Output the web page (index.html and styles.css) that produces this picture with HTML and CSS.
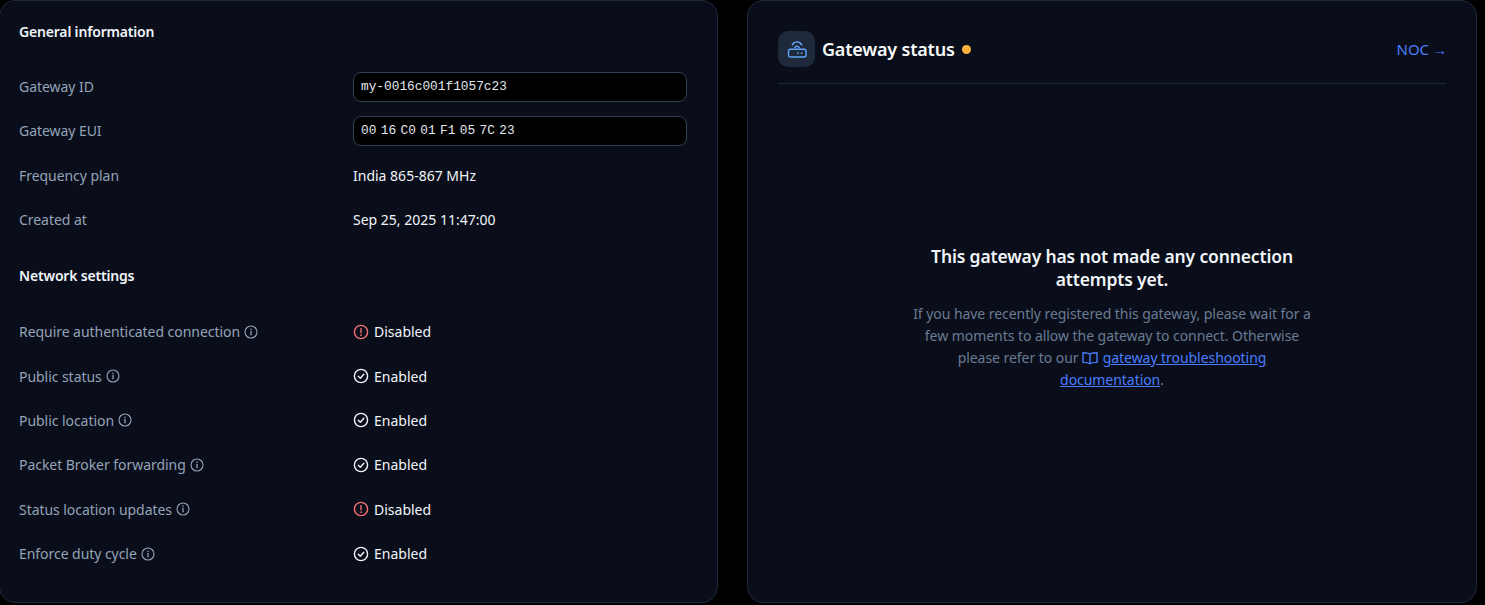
FILE: index.html
```html
<!DOCTYPE html>
<html lang="en">
<head>
    <meta charset="UTF-8">
    <meta name="viewport" content="width=device-width, initial-scale=1.0">
    <title>Gateway overview</title>
    <link rel="stylesheet" href="styles.css">
</head>
<body>
    <svg class="icon-defs" width="0" height="0">
        <symbol id="i-info" viewBox="0 0 14 14">
            <circle cx="7" cy="7" r="6" fill="none" stroke="currentColor" stroke-width="1.1"/>
            <path d="M7 6.4v3.4" fill="none" stroke="currentColor" stroke-width="1.3" stroke-linecap="round"/>
            <circle cx="7" cy="4.3" r=".8" fill="currentColor"/>
        </symbol>
        <symbol id="i-check" viewBox="0 0 16 16">
            <circle cx="8" cy="8" r="6.6" fill="none" stroke="currentColor" stroke-width="1.4"/>
            <path d="M5.3 8.2l2 2 3.5-4" fill="none" stroke="currentColor" stroke-width="1.4" stroke-linecap="round" stroke-linejoin="round"/>
        </symbol>
        <symbol id="i-alert" viewBox="0 0 16 16">
            <circle cx="8" cy="8" r="6.6" fill="none" stroke="currentColor" stroke-width="1.4"/>
            <path d="M8 4.6v4.2" fill="none" stroke="currentColor" stroke-width="1.4" stroke-linecap="round"/>
            <circle cx="8" cy="11.2" r=".85" fill="currentColor"/>
        </symbol>
    </svg>

    <div class="page">
        <section class="card info-card">
            <h3 class="section-title first">General information</h3>
            <div class="info-row">
                <div class="info-label">Gateway ID</div>
                <div class="code-box">my-0016c001f1057c23</div>
            </div>
            <div class="info-row">
                <div class="info-label">Gateway EUI</div>
                <div class="code-box">
                    <span>00</span><span>16</span><span>C0</span><span>01</span><span>F1</span><span>05</span><span>7C</span><span>23</span>
                </div>
            </div>
            <div class="info-row">
                <div class="info-label">Frequency plan</div>
                <div class="info-value">India 865-867 MHz</div>
            </div>
            <div class="info-row">
                <div class="info-label">Created at</div>
                <div class="info-value">Sep 25, 2025 11:47:00</div>
            </div>

            <h3 class="section-title">Network settings</h3>
            <div class="info-row">
                <div class="info-label">Require authenticated connection <svg class="info-icon"><use href="#i-info"/></svg></div>
                <div class="info-value status"><svg class="status-icon off"><use href="#i-alert"/></svg>Disabled</div>
            </div>
            <div class="info-row">
                <div class="info-label">Public status <svg class="info-icon"><use href="#i-info"/></svg></div>
                <div class="info-value status"><svg class="status-icon"><use href="#i-check"/></svg>Enabled</div>
            </div>
            <div class="info-row">
                <div class="info-label">Public location <svg class="info-icon"><use href="#i-info"/></svg></div>
                <div class="info-value status"><svg class="status-icon"><use href="#i-check"/></svg>Enabled</div>
            </div>
            <div class="info-row">
                <div class="info-label">Packet Broker forwarding <svg class="info-icon"><use href="#i-info"/></svg></div>
                <div class="info-value status"><svg class="status-icon"><use href="#i-check"/></svg>Enabled</div>
            </div>
            <div class="info-row">
                <div class="info-label">Status location updates <svg class="info-icon"><use href="#i-info"/></svg></div>
                <div class="info-value status"><svg class="status-icon off"><use href="#i-alert"/></svg>Disabled</div>
            </div>
            <div class="info-row">
                <div class="info-label">Enforce duty cycle <svg class="info-icon"><use href="#i-info"/></svg></div>
                <div class="info-value status"><svg class="status-icon"><use href="#i-check"/></svg>Enabled</div>
            </div>
        </section>

        <section class="card status-card">
            <div class="status-header">
                <div class="status-heading">
                    <div class="router-badge">
                        <svg width="20" height="20" viewBox="0 0 20 20" fill="none" stroke="currentColor" stroke-width="1.4" stroke-linecap="round">
                            <rect x="1.5" y="10.2" width="17.6" height="7.8" rx="2"/>
                            <path d="M7.8 8.4C8.8 6.8 11.2 6.8 12.2 8.4"/>
                            <path d="M5.3 5.8C7.4 1.9 12.6 1.9 14.7 5.8"/>
                            <path d="M10.8 14.2h.01M14.6 14.2h.01" stroke-width="1.7"/>
                        </svg>
                    </div>
                    <h2 class="status-title">Gateway status</h2>
                    <span class="status-dot"></span>
                </div>
                <a class="noc-link" href="#">NOC <span class="noc-arrow">→</span></a>
            </div>
            <div class="empty-state">
                <h3 class="empty-title">This gateway has not made any connection attempts yet.</h3>
                <p class="empty-text">
                    If you have recently registered this gateway, please wait for a few moments to allow the gateway to connect. Otherwise please refer to our
                    <svg class="book-icon" viewBox="0 0 16 16" fill="none" stroke="currentColor" stroke-width="1.4" stroke-linejoin="round"><path d="M8 4.2C6.8 3.1 4.6 2.8 1 2.8v9.6c3.6 0 5.8.3 7 1.4 1.2-1.1 3.4-1.4 7-1.4V2.8c-3.6 0-5.8.3-7 1.4zM8 4.2v9.6"/></svg>
                    <a href="#">gateway troubleshooting documentation</a>.
                </p>
            </div>
        </section>
    </div>
</body>
</html>
```

FILE: styles.css
```css
* {
    margin: 0;
    padding: 0;
    box-sizing: border-box;
}

body {
    font-family: "Noto Sans", "Open Sans", sans-serif;
    font-size: 14px;
    background-color: #000;
    color: #f1f5f9;
    overflow: hidden;
}

.icon-defs {
    display: block;
    height: 0;
}

.page {
    display: grid;
    grid-template-columns: 719px 730px;
    column-gap: 29px;
    margin-left: -1px;
}

.card {
    height: 603px;
    background-color: #090e1a;
    border: 1px solid #1e293b;
    border-radius: 16px;
}

/* ----------  left card  ---------- */
.info-card {
    padding: 0 30px 0 19px;
}

.section-title {
    height: 67.5px;
    padding-top: 24px;
    font-size: 14px;
    line-height: 20px;
    font-weight: 600;
    color: #f1f5f9;
    letter-spacing: -0.18px;
}

.section-title.first {
    padding-top: 21px;
    height: 63.4px;
}

.info-row {
    display: grid;
    grid-template-columns: 334px 334px;
    align-items: center;
    height: 44.4px;
}

.info-label {
    color: #94a3b8;
    display: flex;
    align-items: center;
    gap: 4px;
    letter-spacing: -0.05px;
}

.info-value {
    color: #f1f5f9;
}

.info-icon {
    width: 14px;
    height: 14px;
    color: #94a3b8;
}

.code-box {
    display: flex;
    align-items: center;
    gap: 4.4px;
    height: 30px;
    padding: 0 7px;
    background-color: #000;
    border: 1px solid #334155;
    border-radius: 8px;
    font-family: "Liberation Mono", monospace;
    font-size: 12.8px;
    color: #e2e8f0;
}

.status {
    display: flex;
    align-items: center;
    gap: 5px;
}

.status-icon {
    width: 16px;
    height: 16px;
    color: #f1f5f9;
}

.status-icon.off {
    color: #f87171;
}

/* ----------  right card  ---------- */
.status-card {
    padding: 0 30px;
}

.status-header {
    display: flex;
    justify-content: space-between;
    align-items: center;
    height: 83px;
    padding-top: 14px;
    border-bottom: 1px solid #1e293b;
}

.status-heading {
    display: flex;
    align-items: center;
    gap: 7px;
}

.router-badge {
    display: flex;
    align-items: center;
    justify-content: center;
    width: 37px;
    height: 36px;
    background-color: #1e293b;
    border-radius: 10px;
    color: #60a5fa;
}

.status-title {
    font-size: 18px;
    font-weight: 600;
    letter-spacing: -0.2px;
    color: #f8fafc;
}

.status-dot {
    width: 9px;
    height: 9px;
    background-color: #fbb03b;
    border-radius: 50%;
}

.noc-link {
    color: #4a7dff;
    text-decoration: none;
    font-size: 15px;
    margin-right: -1px;
}

.noc-arrow {
    font-family: "Liberation Sans", sans-serif;
    font-size: 14px;
}

.empty-state {
    width: 410px;
    margin: 0 auto;
    padding-top: 161px;
    text-align: center;
}

.empty-title {
    font-size: 17.5px;
    line-height: 23px;
    font-weight: 600;
    letter-spacing: -0.15px;
    color: #f1f5f9;
}

.empty-text {
    margin-top: 12px;
    line-height: 22px;
    color: #6b7b93;
    letter-spacing: -0.05px;
}

.empty-text a {
    color: #4a7dff;
}

.book-icon {
    width: 16px;
    height: 16px;
    margin: 0 1px 0 0;
    vertical-align: -3px;
    color: #4a7dff;
}
```
